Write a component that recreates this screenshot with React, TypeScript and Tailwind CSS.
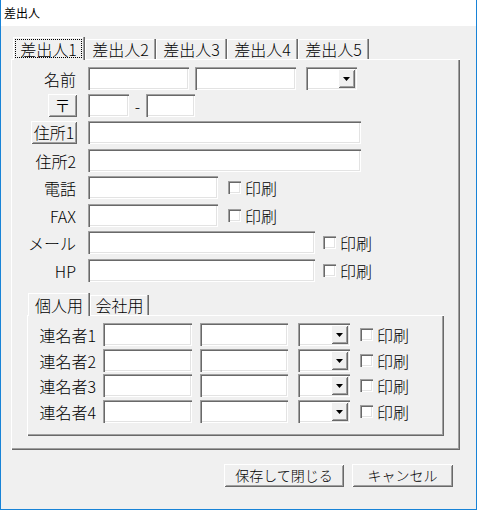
import React from "react";

const sunken =
  "bg-white shadow-[inset_1px_1px_0_#a0a0a0,inset_2px_2px_0_#696969,inset_-1px_-1px_0_#ffffff,inset_-2px_-2px_0_#e3e3e3]";
const raised =
  "bg-[#f0f0f0] shadow-[inset_1px_1px_0_#ffffff,inset_-1px_-1px_0_#696969,inset_2px_2px_0_#f0f0f0,inset_-2px_-2px_0_#a0a0a0]";
const panel =
  "bg-[#f0f0f0] shadow-[inset_1px_1px_0_#ffffff,inset_-1px_-1px_0_#696969,inset_-2px_-2px_0_#a0a0a0]";
const tab =
  "bg-[#f0f0f0] shadow-[inset_-1px_0_0_#696969,inset_-2px_0_0_#a0a0a0,inset_1px_1px_0_#ffffff]";

function Input({ w }: { w: string }) {
  return <div className={`${w} h-[23px] ${sunken}`} />;
}

function Combo({ w }: { w: string }) {
  return (
    <div className={`${w} h-[23px] ${sunken} flex justify-end items-start pt-[2px] pr-[2px]`}>
      <div className={`w-[17px] h-[19px] ${raised} flex items-center justify-center`}>
        <svg width="7" height="4" viewBox="0 0 7 4">
          <polygon points="0,0 7,0 3.5,4" fill="#000" />
        </svg>
      </div>
    </div>
  );
}

function Check() {
  return <div className={`w-[13px] h-[13px] ${sunken}`} />;
}

function Print({ ml }: { ml: string }) {
  return (
    <div className={`flex items-center ${ml}`}>
      <Check />
      <span className="ml-[4px] leading-none">印刷</span>
    </div>
  );
}

function Btn({ w, children, cls = "" }: { w: string; children: React.ReactNode; cls?: string }) {
  return (
    <div className={`${w} h-[23px] ${raised} flex items-center justify-center leading-none pb-[1px] ${cls}`}>
      {children}
    </div>
  );
}

function Row({ label, children, mt }: { label: React.ReactNode; children: React.ReactNode; mt: string }) {
  return (
    <div className={`flex items-center h-[23px] ${mt}`}>
      <div className="w-[66px] flex justify-end leading-none">{label}</div>
      <div className="ml-[11px] flex items-center">{children}</div>
    </div>
  );
}

function RenRow({ n, mt }: { n: number; mt: string }) {
  return (
    <div className={`flex items-center h-[23px] ${mt}`}>
      <div className="w-[69px] text-right leading-none">連名者{n}</div>
      <div className="ml-[7px]">
        <Input w="w-[89px]" />
      </div>
      <div className="ml-[8px]">
        <Input w="w-[88px]" />
      </div>
      <div className="ml-[10px]">
        <Combo w="w-[52px]" />
      </div>
      <Print ml="ml-[10px]" />
    </div>
  );
}

export default function App() {
  return (
    <div className="w-[477px] h-[510px] flex flex-col bg-[#f0f0f0] border-x border-b border-[#1883d7] text-black font-['Noto_Sans_CJK_JP',sans-serif] font-light text-[16px]">
      <div className="h-[26px] bg-white flex items-center pl-[3px] text-[12px] leading-none shrink-0 font-normal">
        差出人
      </div>
      <div className="flex-1 flex flex-col pl-[10px] pt-[11px]">
        {/* outer tabs */}
        <div className="flex items-end h-[22px] pl-[2px]">
          <div className={`w-[72px] h-[23px] mb-[-1px] relative z-10 p-[2px] pr-[3px] ${tab}`}>
            <div className="w-full h-full border border-dotted border-black flex items-center justify-center leading-none">
              差出人1
            </div>
          </div>
          {["差出人2", "差出人3", "差出人4", "差出人5"].map((t) => (
            <div
              key={t}
              className={`w-[71px] h-[20px] ${tab} flex items-center justify-center leading-none`}
            >
              {t}
            </div>
          ))}
        </div>
        <div className={`w-[449px] h-[391px] flex flex-col pt-[8px] ${panel}`}>
          <Row label={<span className="pr-[1px]">名前</span>} mt="">
            <Input w="w-[101px]" />
            <div className="ml-[6px]">
              <Input w="w-[101px]" />
            </div>
            <div className="ml-[10px]">
              <Combo w="w-[51px]" />
            </div>
          </Row>
          <Row label={<Btn w="w-[29px]">〒</Btn>} mt="mt-[4px]">
            <Input w="w-[41px]" />
            <span className="w-[17px] text-center leading-none">-</span>
            <Input w="w-[49px]" />
          </Row>
          <Row label={<Btn w="w-[46px]">住所1</Btn>} mt="mt-[4px]">
            <Input w="w-[273px]" />
          </Row>
          <Row label={<span className="pr-[1px]">住所2</span>} mt="mt-[5px]">
            <Input w="w-[273px]" />
          </Row>
          <Row label={<span className="pr-[1px]">電話</span>} mt="mt-[4px]">
            <Input w="w-[130px]" />
            <Print ml="ml-[10px]" />
          </Row>
          <Row label={<span className="pr-[1px]">FAX</span>} mt="mt-[5px]">
            <Input w="w-[130px]" />
            <Print ml="ml-[10px]" />
          </Row>
          <Row label={<span className="pr-[1px]">メール</span>} mt="mt-[4px]">
            <Input w="w-[227px]" />
            <Print ml="ml-[8px]" />
          </Row>
          <Row label={<span className="pr-[1px]">HP</span>} mt="mt-[5px]">
            <Input w="w-[227px]" />
            <Print ml="ml-[8px]" />
          </Row>

          {/* inner tabs */}
          <div className="mt-[11px] ml-[16px] flex flex-col">
            <div className="flex items-end h-[22px] pl-[1px]">
              <div
                className={`w-[62px] h-[23px] mb-[-1px] relative z-10 ${tab} flex items-center justify-center leading-none`}
              >
                個人用
              </div>
              <div className={`w-[59px] h-[20px] ${tab} flex items-center justify-center leading-none`}>
                会社用
              </div>
            </div>
            <div className={`w-[417px] h-[121px] flex flex-col pt-[8px] ${panel}`}>
              <RenRow n={1} mt="" />
              <RenRow n={2} mt="mt-[3px]" />
              <RenRow n={3} mt="mt-[2px]" />
              <RenRow n={4} mt="mt-[3px]" />
            </div>
          </div>
        </div>
        <div className="flex mt-[14px] pl-[213px] gap-[8px]">
          <Btn w="w-[120px]" cls="h-[22px] text-[14px]">
            保存して閉じる
          </Btn>
          <Btn w="w-[101px]" cls="h-[22px] text-[14px]">
            キャンセル
          </Btn>
        </div>
      </div>
    </div>
  );
}
